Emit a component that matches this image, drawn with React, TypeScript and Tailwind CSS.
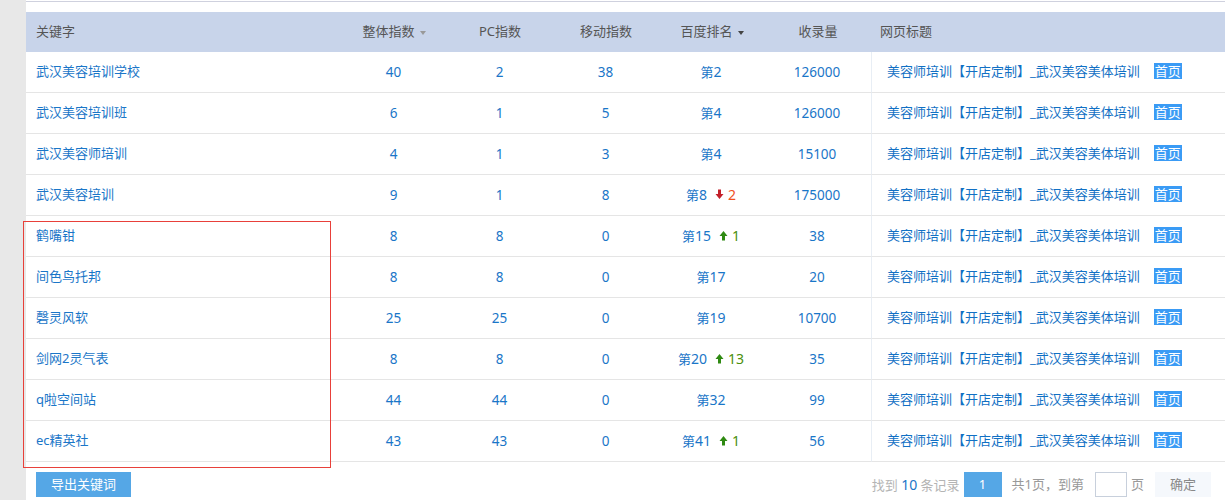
const rows = [
  { keyword: '武汉美容培训学校', total: 40, pc: 2, mobile: 38, rank: 2, count: 126000 },
  { keyword: '武汉美容培训班', total: 6, pc: 1, mobile: 5, rank: 4, count: 126000 },
  { keyword: '武汉美容师培训', total: 4, pc: 1, mobile: 3, rank: 4, count: 15100 },
  { keyword: '武汉美容培训', total: 9, pc: 1, mobile: 8, rank: 8, change: -2, count: 175000 },
  { keyword: '鹤嘴钳', total: 8, pc: 8, mobile: 0, rank: 15, change: 1, count: 38 },
  { keyword: '间色鸟托邦', total: 8, pc: 8, mobile: 0, rank: 17, count: 20 },
  { keyword: '磬灵风软', total: 25, pc: 25, mobile: 0, rank: 19, count: 10700 },
  { keyword: '剑网2灵气表', total: 8, pc: 8, mobile: 0, rank: 20, change: 13, count: 35 },
  { keyword: 'q啦空间站', total: 44, pc: 44, mobile: 0, rank: 32, count: 99 },
  { keyword: 'ec精英社', total: 43, pc: 43, mobile: 0, rank: 41, change: 1, count: 56 },
];

const Arrow = ({ up }: { up: boolean }) => (
  <svg width="9" height="11" viewBox="0 0 9 11" className="inline-block">
    {up ? (
      <path d="M4.5 1 L8.5 6 H6 V10.5 H3 V6 H0.5 Z" fill="#2f8a12" />
    ) : (
      <path d="M3 0.5 H6 V5 H8.5 L4.5 10 L0.5 5 H3 Z" fill="#c3202a" />
    )}
  </svg>
);

const App = () => {
  return (
    <div
      className="flex h-[500px] w-[1225px] overflow-hidden bg-white text-[13px] text-[#1a76c8]"
      style={{ fontFamily: '"Noto Sans", "Noto Sans CJK SC", sans-serif' }}
    >
      <div className="w-[26px] shrink-0 bg-[#e8e8e8]" />
      <div className="relative flex-1">
        <div className="mt-px h-[11px] border-t border-[#cfd1de]" />

        <table className="w-full table-fixed border-separate border-spacing-0">
          <thead>
            <tr className="h-[40px] bg-[#c8d4ea] text-[#555555]">
              <th className="w-[315px] pl-[10px] text-left font-normal">关键字</th>
              <th className="w-[106px] font-normal">
                整体指数
                <span className="ml-[5px] inline-block border-x-[3px] border-t-[4px] border-x-transparent border-t-[#999999] align-middle" />
              </th>
              <th className="w-[106px] font-normal">PC指数</th>
              <th className="w-[106px] font-normal">移动指数</th>
              <th className="w-[106px] font-normal">
                百度排名
                <span className="ml-[5px] inline-block border-x-[3px] border-t-[4px] border-x-transparent border-t-[#444444] align-middle" />
              </th>
              <th className="w-[106px] font-normal">收录量</th>
              <th className="pl-[9px] text-left font-normal">网页标题</th>
            </tr>
          </thead>
          <tbody>
            {rows.map((row) => (
              <tr key={row.keyword} className="h-[41px] text-center">
                <td className="border-b border-[#e5e5e5] pl-[10px] text-left">{row.keyword}</td>
                <td className="border-b border-[#e5e5e5] pr-px text-[13.5px]">{row.total}</td>
                <td className="border-b border-[#e5e5e5] pr-px text-[13.5px]">{row.pc}</td>
                <td className="border-b border-[#e5e5e5] pr-px text-[13.5px]">{row.mobile}</td>
                <td className="border-b border-[#e5e5e5] pr-[2px]">
                  第<span className="text-[14px]">{row.rank}</span>
                  {row.change !== undefined && (
                    <span className="ml-[8px] inline-flex items-center gap-[4px]">
                      <Arrow up={row.change > 0} />
                      <span className={row.change > 0 ? 'text-[14px] text-[#4b8f0c]' : 'text-[14px] text-[#f0501e]'}>
                        {Math.abs(row.change)}
                      </span>
                    </span>
                  )}
                </td>
                <td className="border-b border-[#e5e5e5] pr-[2px] text-[13.5px]">{row.count}</td>
                <td className="border-b border-l border-b-[#e5e5e5] border-l-[#e8eef5] pl-[15px] text-left text-[#1170c4]">
                  美容师培训【开店定制】_武汉美容美体培训
                  <span className="ml-[14px] inline-block h-[16px] w-[28px] bg-[#3a9bf5] text-center leading-[16px] text-white">
                    首页
                  </span>
                </td>
              </tr>
            ))}
          </tbody>
        </table>

        <div className="flex items-center justify-between pl-[10px] pr-[14px] pt-[10px]">
          <button className="h-[25px] w-[95px] bg-[#55a7e6] text-white">导出关键词</button>
          <div className="flex items-center text-[#b4b4b4]">
            <span>
              找到 <span className="text-[14px] text-[#1a76c8]">10</span> 条记录
            </span>
            <span className="ml-[4px] h-[25px] w-[38px] bg-[#55a7e6] text-center leading-[25px] text-white">1</span>
            <span className="ml-[10px] text-[#999999]">共1页，到第</span>
            <input className="ml-[11px] h-[25px] w-[32px] border border-[#c8d0dc] bg-white" />
            <span className="ml-[4px] text-[#999999]">页</span>
            <button className="ml-[11px] h-[25px] w-[56px] bg-[#f5f8fc] text-[#888888]">确定</button>
          </div>
        </div>

        {/* hand-drawn annotation box over the rows */}
        <div className="pointer-events-none absolute left-[-3px] top-[221px] h-[247px] w-[308px] border border-[#e8403a]" />
      </div>
    </div>
  );
};

export default App;
